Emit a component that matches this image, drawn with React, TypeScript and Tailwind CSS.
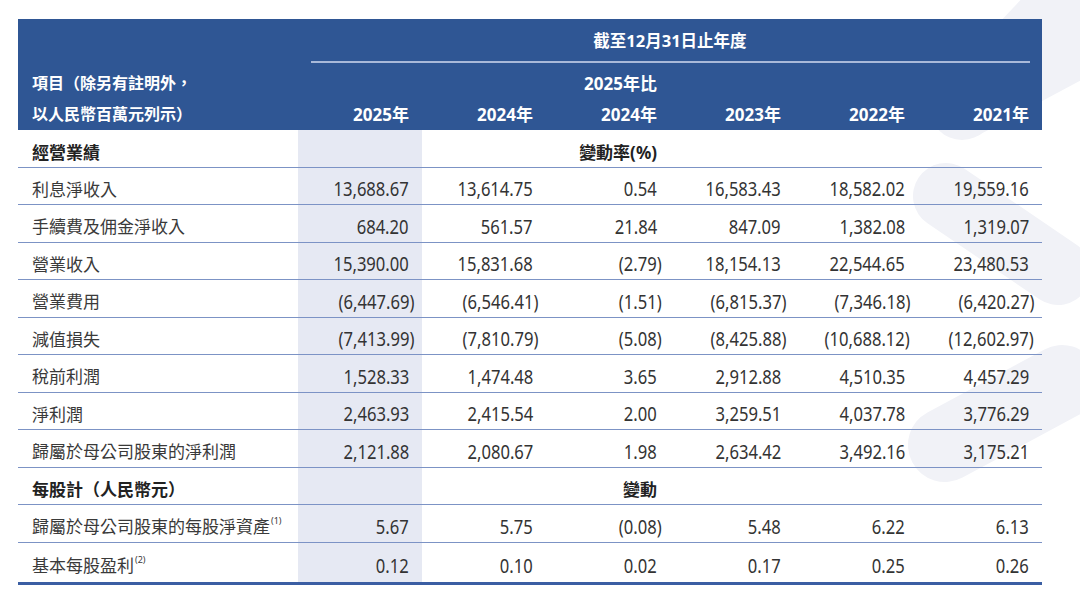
import React from "react";

type Row = {
  label: string;
  sup?: string;
  vals?: string[];
  bold?: boolean;
  mid?: string;
};

const rows: Row[] = [
  { label: "經營業績", bold: true, mid: "變動率(%)" },
  { label: "利息淨收入", vals: ["13,688.67", "13,614.75", "0.54", "16,583.43", "18,582.02", "19,559.16"] },
  { label: "手續費及佣金淨收入", vals: ["684.20", "561.57", "21.84", "847.09", "1,382.08", "1,319.07"] },
  { label: "營業收入", vals: ["15,390.00", "15,831.68", "(2.79)", "18,154.13", "22,544.65", "23,480.53"] },
  { label: "營業費用", vals: ["(6,447.69)", "(6,546.41)", "(1.51)", "(6,815.37)", "(7,346.18)", "(6,420.27)"] },
  { label: "減值損失", vals: ["(7,413.99)", "(7,810.79)", "(5.08)", "(8,425.88)", "(10,688.12)", "(12,602.97)"] },
  { label: "稅前利潤", vals: ["1,528.33", "1,474.48", "3.65", "2,912.88", "4,510.35", "4,457.29"] },
  { label: "淨利潤", vals: ["2,463.93", "2,415.54", "2.00", "3,259.51", "4,037.78", "3,776.29"] },
  { label: "歸屬於母公司股東的淨利潤", vals: ["2,121.88", "2,080.67", "1.98", "2,634.42", "3,492.16", "3,175.21"] },
  { label: "每股計（人民幣元）", bold: true, mid: "變動" },
  { label: "歸屬於母公司股東的每股淨資產", sup: "(1)", vals: ["5.67", "5.75", "(0.08)", "5.48", "6.22", "6.13"] },
  { label: "基本每股盈利", sup: "(2)", vals: ["0.12", "0.10", "0.02", "0.17", "0.25", "0.26"] },
];

const years = ["2025年", "", "", "2023年", "2022年", "2021年"];

export default function App() {
  return (
    <div className="relative w-[1080px] h-[607px] overflow-hidden bg-white [font-family:'Noto_Sans','Noto_Sans_CJK_TC',sans-serif]">
      <svg className="absolute left-0 top-0" width="1080" height="607" viewBox="0 0 1080 607">
        <g fill="#f1f2f7">
          <circle cx="962" cy="108" r="32" />
          <polygon points="938,87 1030,-10 1100,-10 1100,70 977,136" />
        </g>
        <g stroke="#f1f2f7" strokeLinecap="round" fill="none">
          <line x1="946" y1="196" x2="1058" y2="272" strokeWidth="66" />
          <line x1="945" y1="445" x2="1062" y2="382" strokeWidth="74" />
        </g>
      </svg>

      <div className="relative ml-[18px] pt-[19px] w-[1024px]">
        {/* Header */}
        <div className="flex h-[111px] bg-[#2f5694] text-white font-bold">
          <div className="w-[280px] pl-[14px] flex flex-col justify-end text-[16px] leading-[31px]">
            <div>項目（除另有註明外，</div>
            <div>以人民幣百萬元列示）</div>
          </div>
          <div className="w-[744px] flex flex-col">
            <div className="h-[42px] flex items-center justify-center pt-[3px] text-[16.5px]">
              截至12月31日止年度
            </div>
            <div className="ml-[13px] mr-[12px] h-[1.5px] bg-[#a9b9d9]" />
            <div className="flex flex-1 items-end text-[17px] leading-[31px]">
              {years.map((y, i) => (
                <div key={i} className="w-[124px] pr-[13px] text-right">
                  {i === 1 ? (
                    "2024年"
                  ) : i === 2 ? (
                    <>
                      <div>2025年比</div>
                      <div>2024年</div>
                    </>
                  ) : (
                    y
                  )}
                </div>
              ))}
            </div>
          </div>
        </div>

        {/* Body */}
        {rows.map((r, idx) => {
          const last = idx === rows.length - 1;
          return (
            <div
              key={idx}
              className={
                last
                  ? "flex h-[42.5px] border-b-[3px] border-[#3b5ea3]"
                  : "flex h-[37.5px] border-b-[1.5px] border-[#7c93c5]"
              }
            >
              <div
                className={
                  r.bold
                    ? "w-[280px] pl-[14px] flex items-center pt-[8px] text-[17px] font-bold text-[#222222]"
                    : "w-[280px] pl-[14px] flex items-center pt-[7px] text-[17px] text-[#3a3a3a]"
                }
              >
                <span>{r.label}</span>
                {r.sup && (
                  <span className="text-[9px] relative top-[-6px] ml-[1px] text-[#3a3a3a]">{r.sup}</span>
                )}
              </div>
              {[0, 1, 2, 3, 4, 5].map((c) => {
                const v = r.vals ? r.vals[c] : c === 2 ? r.mid : "";
                const neg = !!v && v.startsWith("(") && !!r.vals;
                return (
                  <div
                    key={c}
                    className={
                      (c === 0 ? "bg-[#e6e9f3] " : "") +
                      (r.vals
                        ? "w-[124px] pr-[13px] flex items-center justify-end pt-[7px] text-[20px] text-[#333333]"
                        : "w-[124px] pr-[13px] flex items-center justify-end pt-[8px] text-[17px] font-bold text-[#222222]")
                    }
                  >
                    {r.vals ? (
                      <span
                        className={
                          neg
                            ? "inline-block origin-right scale-x-[0.83] mr-[-5px]"
                            : "inline-block origin-right scale-x-[0.83]"
                        }
                      >
                        {v}
                      </span>
                    ) : (
                      <span>{v}</span>
                    )}
                  </div>
                );
              })}
            </div>
          );
        })}
      </div>
    </div>
  );
}
